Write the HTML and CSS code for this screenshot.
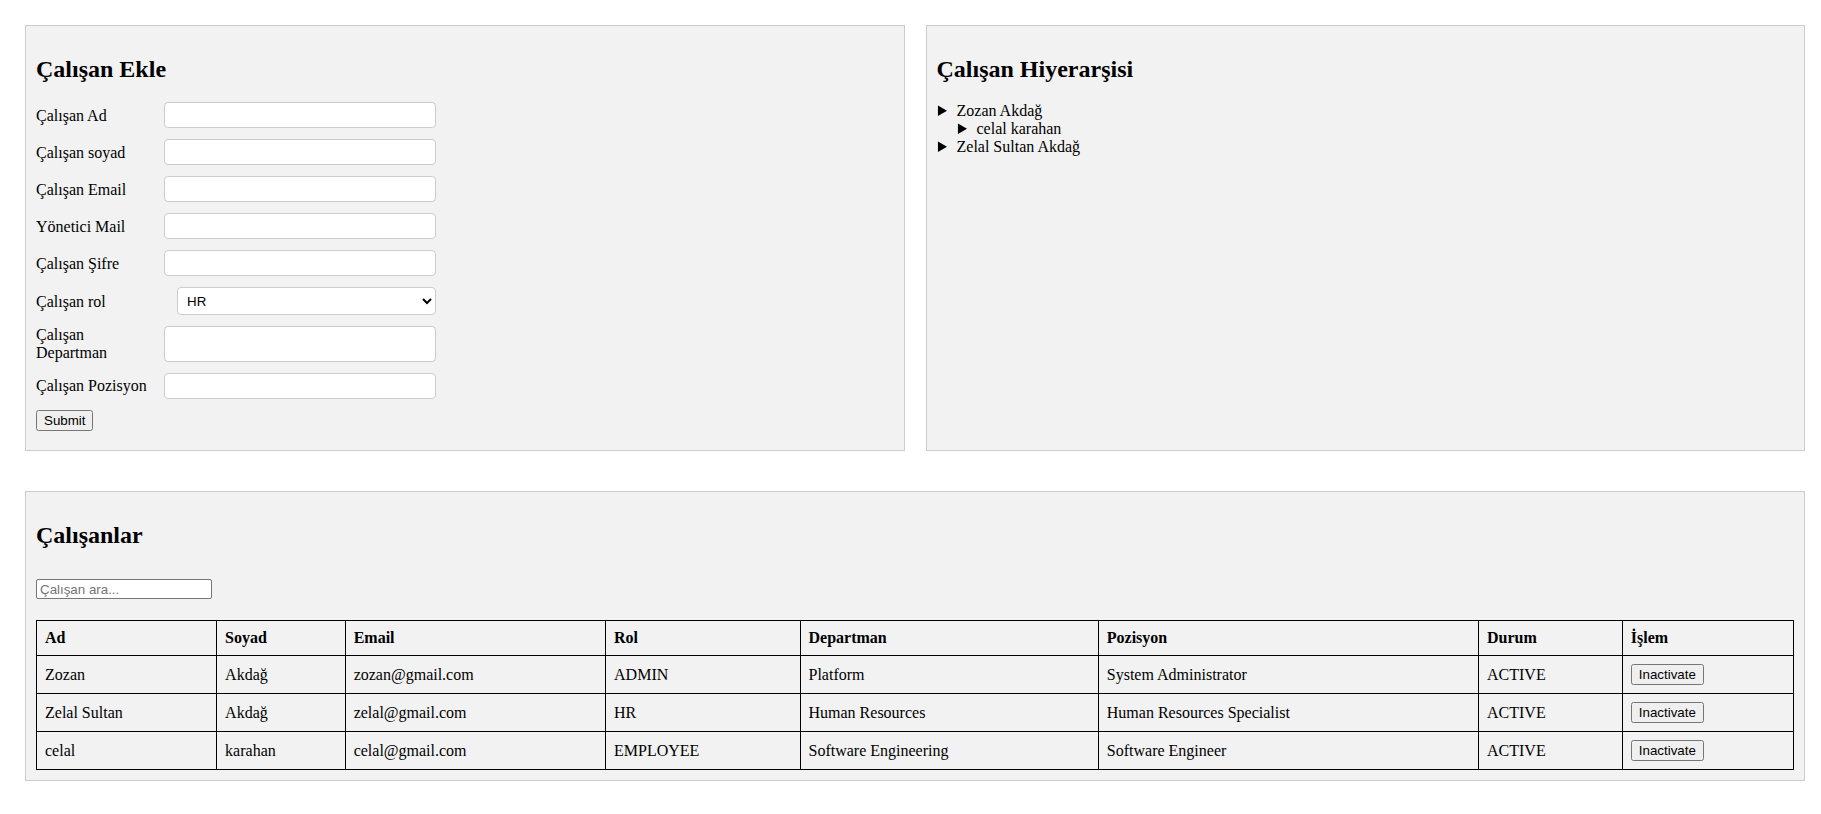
FILE: index.html
```html
<!DOCTYPE html>
<html lang="tr">
<head>
<meta charset="utf-8">
<title>Çalışan Yönetimi</title>
<link rel="stylesheet" href="styles.css">
</head>
<body>
<div class="page">
  <div class="top-row">
    <section class="panel">
      <h2>Çalışan Ekle</h2>
      <form class="employee-form">
        <div class="form-row"><label>Çalışan Ad</label><input class="field" type="text"></div>
        <div class="form-row"><label>Çalışan soyad</label><input class="field" type="text"></div>
        <div class="form-row"><label>Çalışan Email</label><input class="field" type="email"></div>
        <div class="form-row"><label>Yönetici Mail</label><input class="field" type="email"></div>
        <div class="form-row"><label>Çalışan Şifre</label><input class="field" type="password"></div>
        <div class="form-row"><label>Çalışan rol</label>
          <select class="role-select">
            <option>HR</option>
            <option>ADMIN</option>
            <option>EMPLOYEE</option>
          </select>
        </div>
        <div class="form-row"><label>Çalışan Departman</label><input class="field" type="text"></div>
        <div class="form-row"><label>Çalışan Pozisyon</label><input class="field" type="text"></div>
        <div class="form-actions"><button class="btn" type="submit">Submit</button></div>
      </form>
    </section>
    <section class="panel">
      <h2>Çalışan Hiyerarşisi</h2>
      <ul class="tree">
        <li>Zozan Akdağ
          <ul>
            <li>celal karahan</li>
          </ul>
        </li>
        <li>Zelal Sultan Akdağ</li>
      </ul>
    </section>
  </div>
  <section class="panel">
    <h2>Çalışanlar</h2>
    <div class="search-bar"><input class="search" type="text" placeholder="Çalışan ara..."></div>
    <table class="employees">
      <thead>
        <tr><th>Ad</th><th>Soyad</th><th>Email</th><th>Rol</th><th>Departman</th><th>Pozisyon</th><th>Durum</th><th>İşlem</th></tr>
      </thead>
      <tbody>
        <tr><td>Zozan</td><td>Akdağ</td><td>zozan@gmail.com</td><td>ADMIN</td><td>Platform</td><td>System Administrator</td><td>ACTIVE</td><td><button class="btn" type="button">Inactivate</button></td></tr>
        <tr><td>Zelal Sultan</td><td>Akdağ</td><td>zelal@gmail.com</td><td>HR</td><td>Human Resources</td><td>Human Resources Specialist</td><td>ACTIVE</td><td><button class="btn" type="button">Inactivate</button></td></tr>
        <tr><td>celal</td><td>karahan</td><td>celal@gmail.com</td><td>EMPLOYEE</td><td>Software Engineering</td><td>Software Engineer</td><td>ACTIVE</td><td><button class="btn" type="button">Inactivate</button></td></tr>
      </tbody>
    </table>
  </section>
</div>
</body>
</html>
```
FILE: styles.css
```css
html, body {
  margin: 0;
  background: #ffffff;
}

body {
  font-family: "Liberation Serif", "Times New Roman", serif;
  font-size: 16px;
  line-height: 1.107;
  color: #000000;
}

.page {
  padding: 25px 16px 25px 25px;
}

.top-row {
  display: flex;
  gap: 21px;
  margin-bottom: 40px;
}

.top-row .panel {
  flex: 1 1 0;
  min-width: 0;
}

.panel {
  background: #f2f2f2;
  border: 1px solid #cccccc;
  padding: 10px;
}

h2 {
  font-size: 24px;
  font-weight: bold;
  margin: 19.92px 0;
}

/* form */
.employee-form {
  width: 400px;
  margin: 0;
}

.form-row {
  display: flex;
  justify-content: space-between;
  margin-bottom: 11px;
}

.form-row label {
  align-self: center;
  margin-right: 10px;
}

.field {
  box-sizing: border-box;
  flex: 0 0 272px;
  width: 272px;
  min-height: 26px;
  padding: 0 5px;
  border: 1px solid #cccccc;
  border-radius: 4px;
  background: #ffffff;
  font-family: "Liberation Sans", Arial, sans-serif;
  font-size: 13.333px;
}

.role-select {
  box-sizing: border-box;
  flex: 0 0 259px;
  width: 259px;
  height: 28px;
  padding: 0 5px;
  border: 1px solid #cccccc;
  border-radius: 4px;
  background-color: #ffffff;
  color: #000000;
  font-family: "Liberation Sans", Arial, sans-serif;
  font-size: 13.333px;
}

.form-actions {
  margin-bottom: 9px;
}

.btn {
  font-family: "Liberation Sans", Arial, sans-serif;
  font-size: 13.333px;
}

/* hierarchy */
.tree {
  margin: 16px 0;
  padding-left: 20px;
  list-style-type: disclosure-closed;
}

.tree ul {
  margin: 0;
  padding-left: 20px;
  list-style-type: disclosure-closed;
}

/* employees */
.search-bar {
  margin: 31px 0 21px;
}

.search {
  display: block;
  box-sizing: border-box;
  width: 176px;
  height: 20px;
  padding: 1px 3px;
  border: 1px solid #767676;
  border-radius: 2px;
  background: #ffffff;
  font-family: "Liberation Sans", Arial, sans-serif;
  font-size: 13.333px;
}

.search::placeholder {
  color: #757575;
}

.employees {
  width: 100%;
  border-collapse: collapse;
}

.employees th,
.employees td {
  border: 1px solid #000000;
  padding: 8px;
  text-align: left;
}

.employees th {
  font-weight: bold;
}

.employees td {
  font-weight: normal;
}
```
